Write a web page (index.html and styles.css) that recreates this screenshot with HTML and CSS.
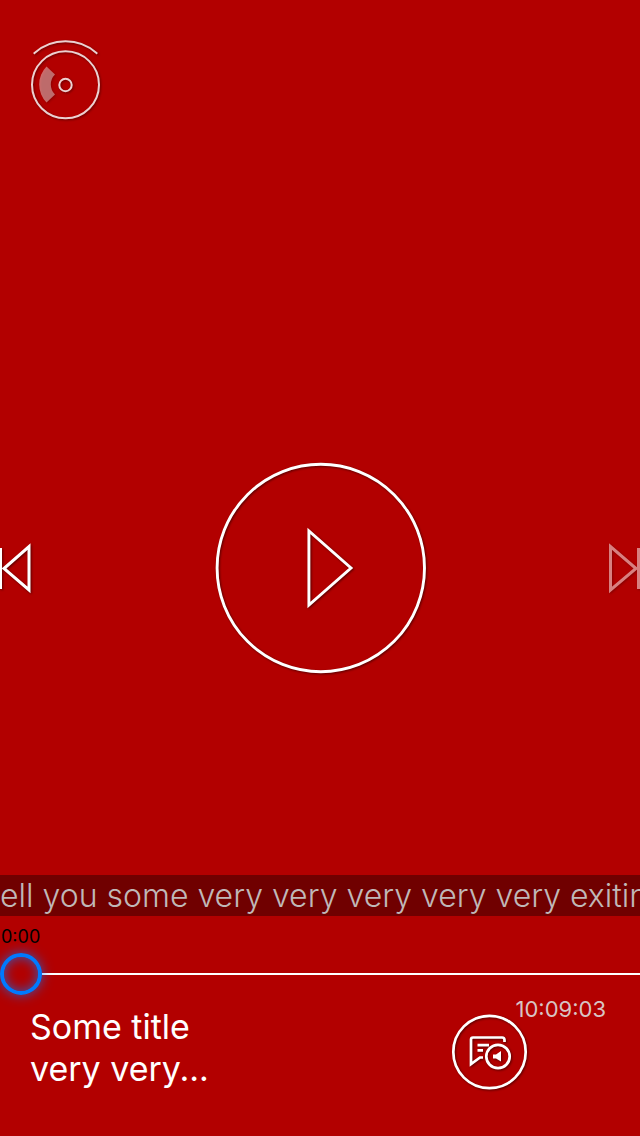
FILE: index.html
```html
<!DOCTYPE html>
<html lang="en">
<head>
<meta charset="utf-8">
<meta name="viewport" content="width=device-width, initial-scale=1">
<title>Player</title>
<link rel="stylesheet" href="styles.css">
</head>
<body>
<main class="player">
  <header class="top">
    <button class="icon-button" type="button" aria-label="Disc">
      <svg class="disc" width="80" height="90" viewBox="0 0 80 90">
        <g fill="none" stroke="#fff" stroke-opacity=".82" stroke-width="2">
          <path d="M9.500 18A47 47 0 0 1 71.500 18" stroke-linecap="square"/>
          <circle cx="40.500" cy="49.800" r="33.500"/>
          <circle cx="40.500" cy="50" r="6.200"/>
        </g>
        <path d="M21.500 31.500L30 39.500A14 14 0 0 0 30 59.500L21.500 67.500A25.800 25.800 0 0 1 21.500 31.500Z" fill="#fff" fill-opacity=".42"/>
      </svg>
    </button>
  </header>

  <section class="controls" aria-label="Playback">
    <button class="icon-button" type="button" aria-label="Previous">
      <svg width="40" height="60" viewBox="0 0 40 60" fill="none" stroke="#fff" stroke-width="3">
        <path d="M4 30.500L29 8.500V52Z"/><path d="M.500 10V51"/>
      </svg>
    </button>
    <button class="icon-button" type="button" aria-label="Play">
      <svg width="216" height="216" viewBox="0 0 216 216" fill="none" stroke="#fff" stroke-width="2.900">
        <circle cx="108.800" cy="108" r="103.700"/>
        <path d="M96.900 71V145L139 108Z"/>
      </svg>
    </button>
    <button class="icon-button dimmed" type="button" aria-label="Next" disabled>
      <svg width="40" height="60" viewBox="0 0 40 60" fill="none" stroke="#fff" stroke-width="3">
        <path d="M36 30.500L10.500 8.500V52Z"/><path d="M38.500 10V51"/>
      </svg>
    </button>
  </section>

  <footer class="bottom">
    <p class="caption">ell you some very very very very very exiting</p>
    <label class="elapsed" for="seek">0:00</label>
    <input class="seek" id="seek" type="range" min="0" max="100" value="0">
    <div class="info">
      <h1 class="title">Some title<br>very very...</h1>
      <button class="icon-button" type="button" aria-label="Audio and subtitles">
        <svg width="78" height="78" viewBox="0 0 78 78" fill="none" stroke="#fff" stroke-width="2.700">
          <circle cx="39.500" cy="39" r="36.200"/>
          <path d="M54.500 29V27Q54.500 24.500 52 24.500H23Q21 24.500 21 26.500V51L30 44.500H33" />
          <path d="M27.500 32.200H39M27.500 37.300H33"/>
          <circle cx="48" cy="43.500" r="11.700"/>
          <path d="M43 41.500H46L51 38V48.500L46 45.500H43Z" fill="#fff" stroke="none"/>
        </svg>
      </button>
      <time class="duration">10:09:03</time>
    </div>
  </footer>
</main>
</body>
</html>
```

FILE: styles.css
```css
* {
  box-sizing: border-box;
}

body {
  margin: 0;
  background: #b20000;
  color: #fff;
  font-family: Inter, "Liberation Sans", sans-serif;
}

.player {
  display: grid;
  grid-template-columns: minmax(0, 1fr);
  grid-template-rows: 1fr auto 1fr;
  min-height: 100vh;
}

.top {
  padding: 35px 25px;
}

.icon-button {
  display: block;
  flex: none;
  padding: 0;
  border: 0;
  background: none;
}

.icon-button svg {
  display: block;
  filter: drop-shadow(1px 1px 1px rgba(0, 0, 0, 0.5));
}

.dimmed {
  opacity: 0.5;
}

.controls {
  display: flex;
  align-items: center;
  justify-content: space-between;
}

.bottom {
  display: flex;
  flex-direction: column;
  justify-content: flex-end;
}

.caption {
  margin: 0;
  overflow: hidden;
  background: #700000;
  color: #c0b8b8;
  font-size: 32px;
  font-weight: 300;
  line-height: 41px;
  white-space: nowrap;
}

.elapsed {
  padding: 9px 1px 0;
  color: #000;
  font-size: 18px;
  line-height: 24px;
}

.seek {
  width: 100%;
  height: 50px;
  margin: 0;
  appearance: none;
  background: none;
}

.seek::-webkit-slider-runnable-track {
  height: 2px;
  background: linear-gradient(to right, transparent 42px, #fff 42px);
}

.seek::-webkit-slider-thumb {
  width: 42px;
  height: 42px;
  margin-top: -20px;
  appearance: none;
  border: 4px solid #007aff;
  border-radius: 50%;
  background: transparent;
  box-shadow: 0 0 12px rgba(0, 122, 255, 0.7), inset 0 0 12px rgba(0, 122, 255, 0.7);
}

.info {
  display: flex;
  align-items: flex-start;
  padding: 0 34px 45px 30px;
}

.title {
  flex: 1;
  margin: 0;
  padding-top: 7px;
  font-size: 34px;
  font-weight: 400;
  line-height: 42px;
}

.info .icon-button {
  padding-top: 14px;
}

.duration {
  margin-left: -12px;
  color: #d8c4c4;
  font-size: 22px;
  line-height: 20px;
}
```
